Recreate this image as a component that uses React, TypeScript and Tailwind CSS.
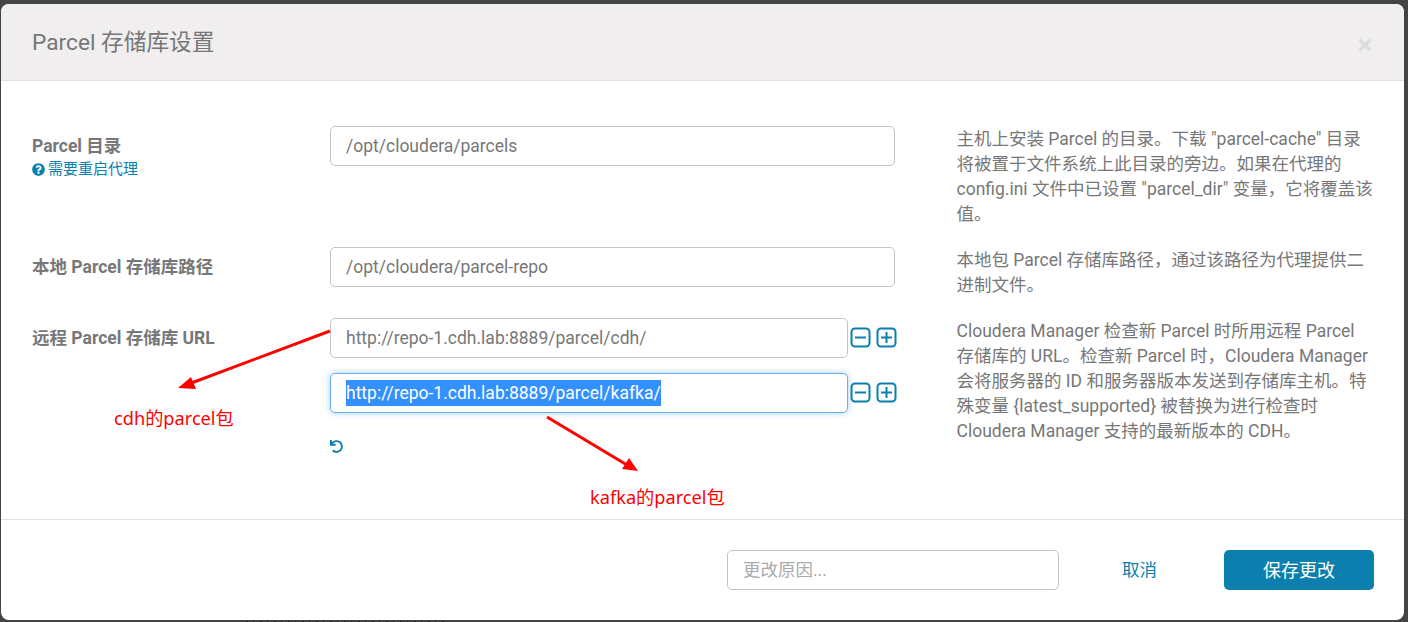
import React from "react";
import { FaQuestionCircle, FaTimes, FaUndo } from "react-icons/fa";

const SquareIcon = ({ plus }: { plus?: boolean }) => (
  <svg width="21" height="21" viewBox="0 0 21 21" fill="none" stroke="#0b7fad" strokeWidth="2" className="shrink-0 -mt-[2px]">
    <rect x="1.5" y="1.5" width="18" height="18" rx="3.5" />
    <path d="M5 10.5h11" />
    {plus && <path d="M10.5 5v11" />}
  </svg>
);

const Input = ({ children, focus }: { children: React.ReactNode; focus?: boolean }) => (
  <div
    className={
      "h-10 flex-1 rounded-[5px] border px-[15px] flex items-center text-[17.5px] text-[#777] " +
      (focus ? "border-[#66afe9] shadow-[0_0_6px_rgba(102,175,233,0.6)]" : "border-[#c4c4c4]")
    }
  >
    {children}
  </div>
);

const Label = ({ children }: { children: React.ReactNode }) => (
  <div className="font-bold text-[17.5px] leading-[20px] text-[#777] pt-[10px]">{children}</div>
);

const Desc = ({ children }: { children: React.ReactNode }) => (
  <div className="text-[17.5px] leading-[25px] text-[#777] pt-[1px] pb-[20px] w-[418px] -ml-[0.5px]">{children}</div>
);

export default function App() {
  return (
    <div
      className="relative w-[1408px] h-[622px] overflow-hidden bg-[#444] pt-[4px] pl-[1px] pr-[4px] pb-[2px]"
      style={{ fontFamily: "Roboto, 'Noto Sans CJK SC', sans-serif" }}
    >
      <div className="h-full flex flex-col bg-white rounded-[8px] overflow-hidden">
        <div className="h-[77px] shrink-0 bg-[#f0eeef] border-b border-[#e0e0e0] flex items-center justify-between pl-[31px] pr-[32px]">
          <span className="text-[22.7px] text-[#777] mt-[3px]">Parcel 存储库设置</span>
          <FaTimes className="text-[#dcdcdc] text-[18px] mt-[6px] mr-[-2px]" />
        </div>

        <div className="h-[439px] shrink-0 pt-[45px] pl-[31px] grid grid-cols-[298px_567px_60px_418px] auto-rows-min border-b border-[#e0e0e0]">
          <div>
            <Label>Parcel 目录</Label>
            <div className="flex items-center gap-[3px] text-[15px] leading-[18px] text-[#0b7fad] mt-[4px]">
              <FaQuestionCircle className="text-[13px]" />
              <span>需要重启代理</span>
            </div>
          </div>
          <div className="pr-[2px]"><div className="flex"><Input>/opt/cloudera/parcels</Input></div></div>
          <div />
          <Desc>主机上安装 Parcel 的目录。下载 "parcel-cache" 目录将被置于文件系统上此目录的旁边。如果在代理的 config.ini 文件中已设置 "parcel_dir" 变量，它将覆盖该值。</Desc>

          <Label>本地 Parcel 存储库路径</Label>
          <div className="pr-[2px]"><div className="flex"><Input>/opt/cloudera/parcel-repo</Input></div></div>
          <div />
          <Desc>本地包 Parcel 存储库路径，通过该路径为代理提供二进制文件。</Desc>

          <Label>远程 Parcel 存储库 URL</Label>
          <div className="flex flex-col gap-[15px]">
            <div className="flex items-center">
              <Input>http://repo-1.cdh.lab:8889/parcel/cdh/</Input>
              <div className="flex gap-[5px] ml-[2px] w-[47px]"><SquareIcon /><SquareIcon plus /></div>
            </div>
            <div className="flex items-center">
              <Input focus><span className="bg-[#3390ff] text-white">http://repo-1.cdh.lab:8889/parcel/kafka/</span></Input>
              <div className="flex gap-[5px] ml-[2px] w-[47px]"><SquareIcon /><SquareIcon plus /></div>
            </div>
            <FaUndo className="text-[#0b7fad] text-[13px] mt-[12px]" />
          </div>
          <div />
          <Desc>{"Cloudera Manager 检查新 Parcel 时所用远程 Parcel 存储库的 URL。检查新 Parcel 时，Cloudera Manager 会将服务器的 ID 和服务器版本发送到存储库主机。特殊变量 {latest_supported} 被替换为进行检查时 Cloudera Manager 支持的最新版本的 CDH。"}</Desc>
        </div>

        <div className="flex-1 flex items-center justify-end pr-[30px]">
          <div className="w-[332px] h-10 rounded-[5px] border border-[#c4c4c4] px-[15px] flex items-center text-[17.5px] text-[#aaa]">更改原因...</div>
          <span className="w-[165px] pr-[4px] text-center text-[#0b7fad] text-[17.5px]">取消</span>
          <div className="w-[150px] h-10 rounded-[5px] bg-[#0b7fad] text-white text-[18px] flex items-center justify-center">保存更改</div>
        </div>
      </div>

      <svg className="absolute left-0 top-0 pointer-events-none" width="1408" height="622" fill="none">
        <path d="M330 331L190 383.5" stroke="#f00" strokeWidth="3" />
        <path d="M178 388L191 377L196 389Z" fill="#f00" />
        <path d="M547 417L627 465" stroke="#f00" strokeWidth="3" />
        <path d="M638 471L622 469L629 458Z" fill="#f00" />
        <path d="M246 621.5H445" stroke="#222" strokeWidth="1" strokeDasharray="2 5 1 6" />
      </svg>
      <span className="absolute left-[114px] top-[406px] text-[18.2px] leading-[24px] text-[#f00] font-['Noto_Sans','Noto_Sans_CJK_SC',sans-serif]">cdh的parcel包</span>
      <span className="absolute left-[590px] top-[485px] text-[18.2px] leading-[24px] text-[#f00] font-['Noto_Sans','Noto_Sans_CJK_SC',sans-serif]">kafka的parcel包</span>
    </div>
  );
}
